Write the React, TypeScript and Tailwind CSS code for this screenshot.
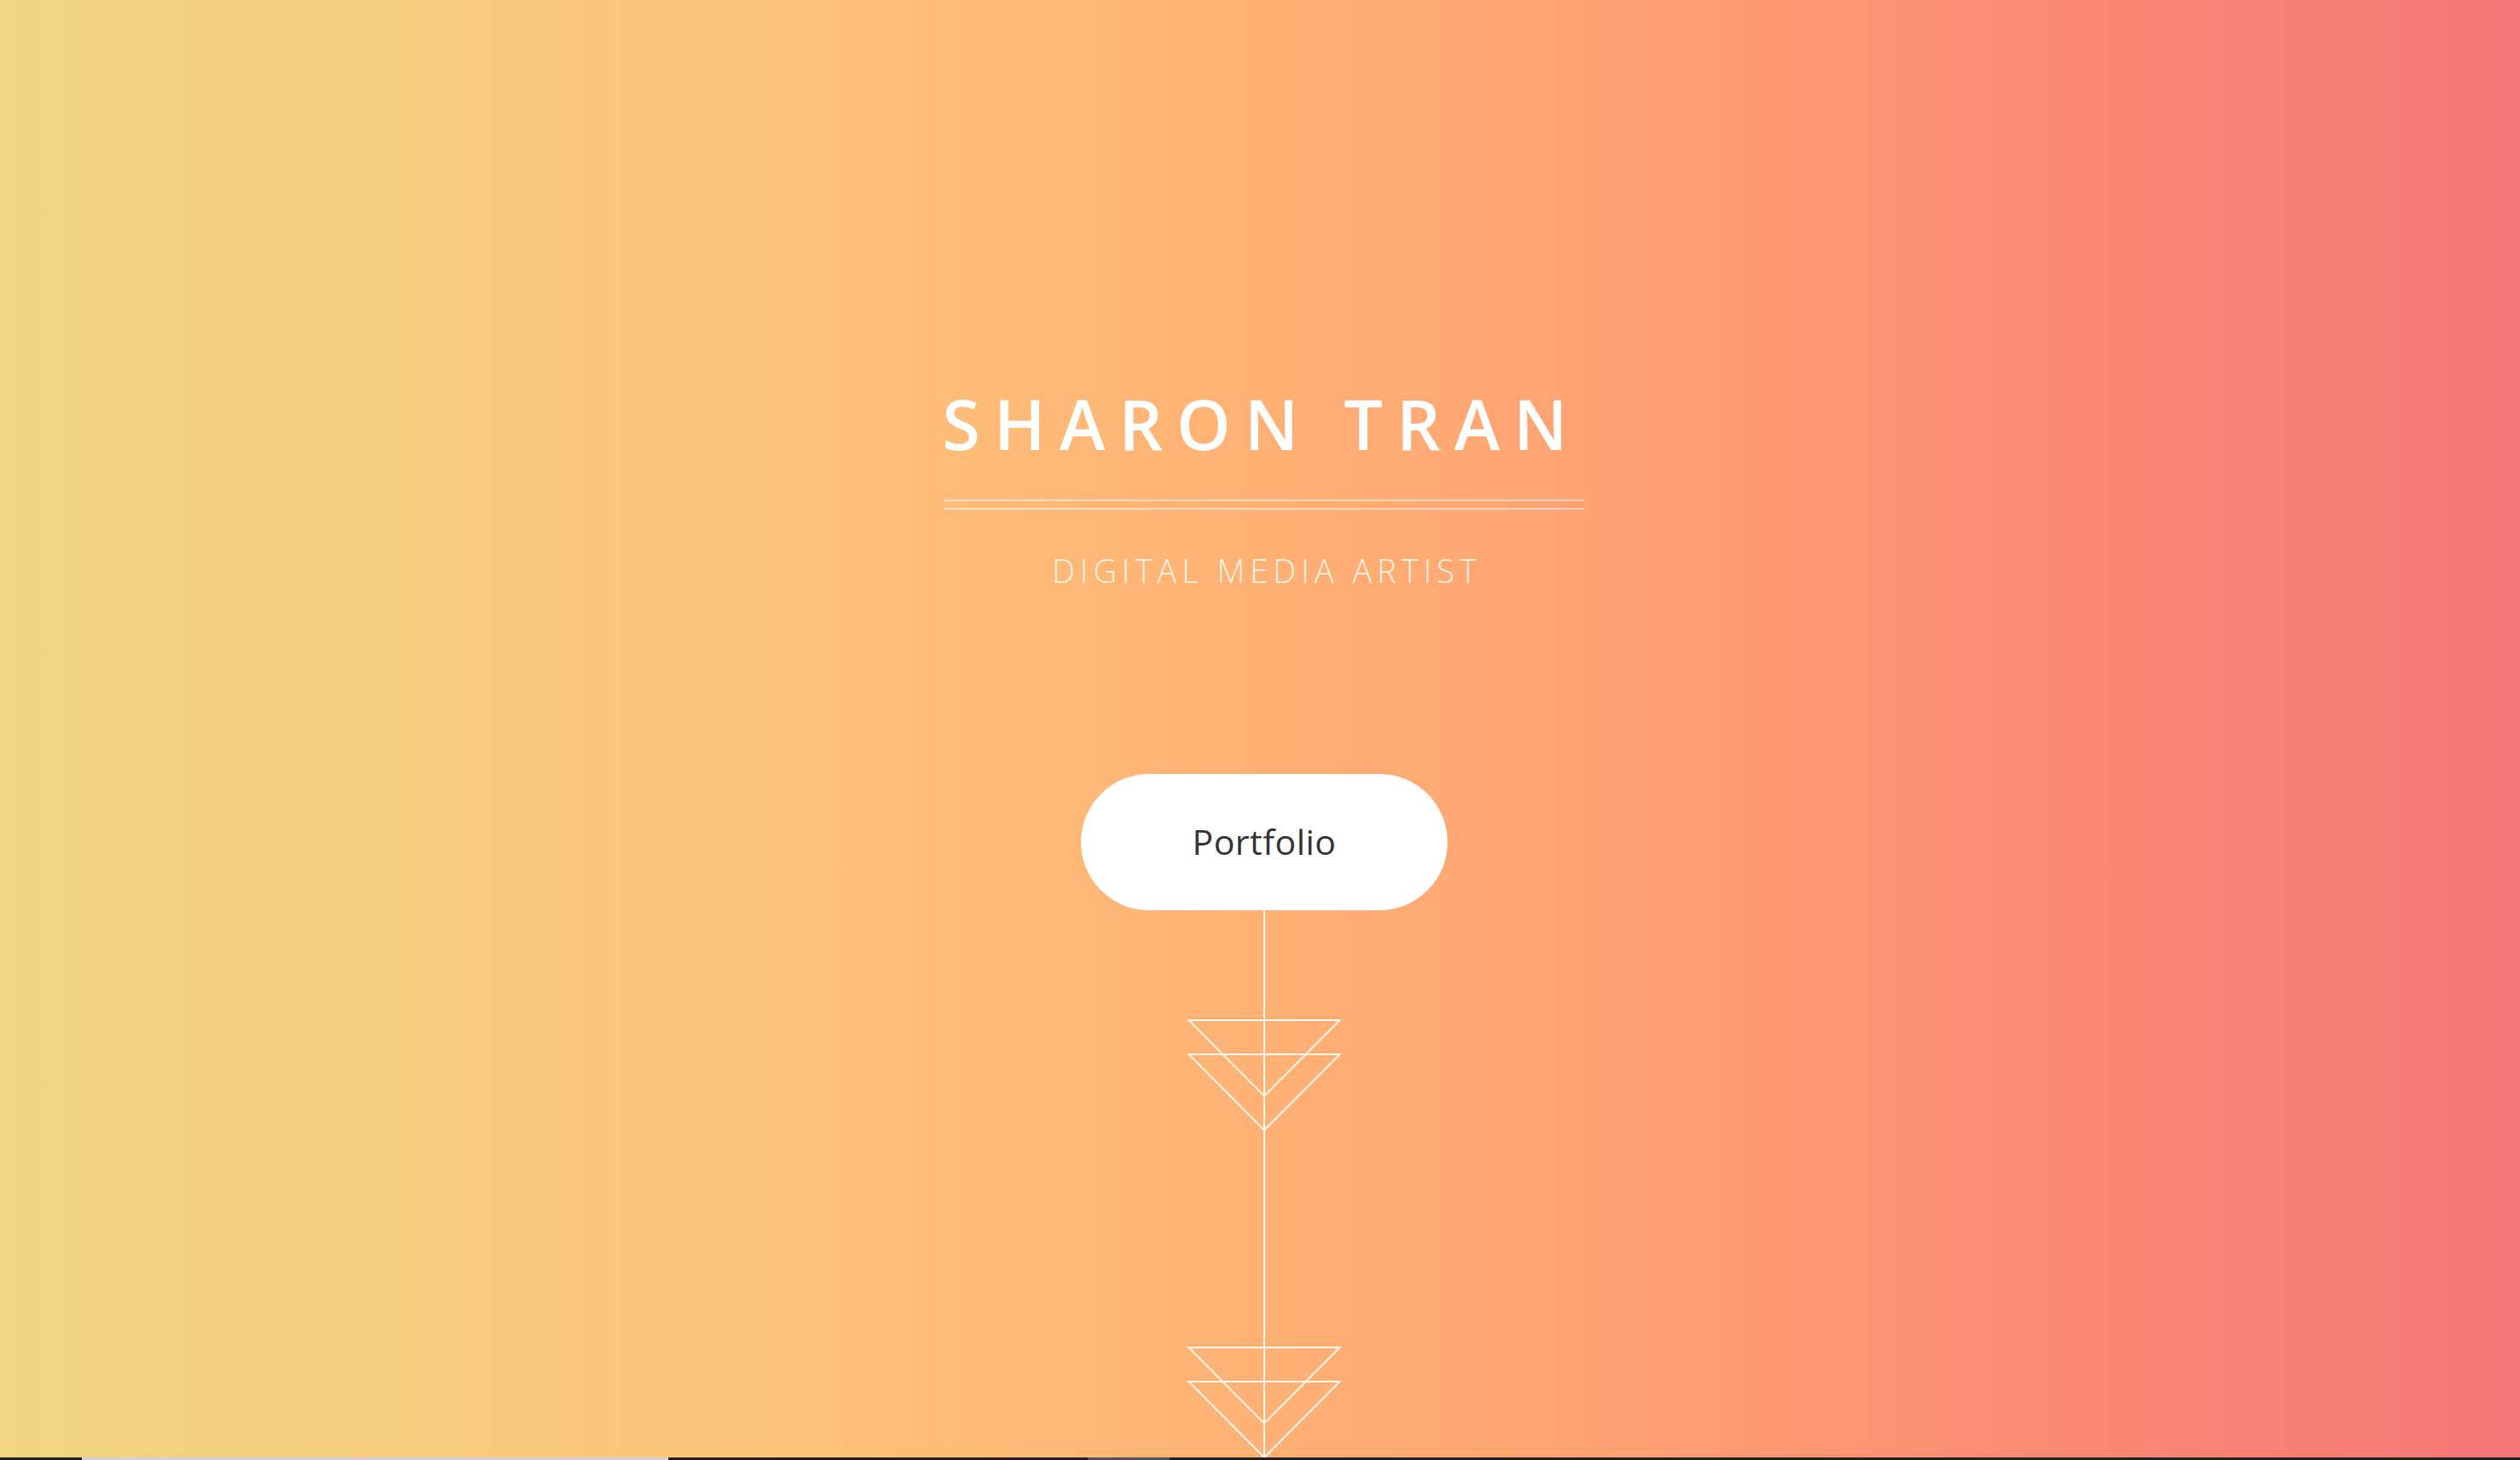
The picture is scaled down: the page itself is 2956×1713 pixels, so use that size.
import React from "react";

function Chevrons() {
  return (
    <svg width="180" height="130" viewBox="0 0 180 130" className="block overflow-visible" fill="none">
      <path d="M1.5 1 L178.5 1 L90 90 Z" stroke="#fff8ee" strokeWidth="2" strokeLinejoin="miter" />
      <path d="M1.5 41 L178.5 41 L90 130 Z" stroke="#fff8ee" strokeWidth="2" strokeLinejoin="miter" />
      <path d="M90 0 V130" stroke="#fff8ee" strokeWidth="2" />
    </svg>
  );
}

export default function App() {
  return (
    <div className="w-[2956px] h-[1713px] overflow-hidden flex flex-col">
      <section className="h-[1710px] w-full flex flex-col items-center bg-[linear-gradient(to_right,#f0d585_0%,#f6cd7e_15%,#fdbf79_35%,#ffb175_50%,#ffa072_65%,#fb8874_83%,#f57677_100%)] pl-[10px]">
        <div className="h-[456px]" />
        <h1
          className="h-[81px] leading-[81px] text-[81px] font-semibold text-white whitespace-nowrap tracking-[16px] pl-[16px] mr-[22px]"
          style={{ fontFamily: '"Open Sans", "Noto Sans", sans-serif' }}
        >
          SHARON TRAN
        </h1>
        <div className="mt-[49px] w-[752px] h-[2px] bg-white/50" />
        <div className="mt-[8px] w-[752px] h-[2px] bg-white/50" />
        <p
          className="mt-[52px] h-[38px] leading-[38px] text-[38px] font-light text-[#fff3e3] whitespace-nowrap tracking-[6px] pl-[6px]"
          style={{ fontFamily: '"Open Sans", "Noto Sans", sans-serif' }}
        >
          DIGITAL MEDIA ARTIST
        </p>
        <button
          className="mt-[220px] w-[430px] h-[160px] rounded-full bg-white flex items-center justify-center text-[41px] text-[#333333] tracking-[0.5px]"
          style={{ fontFamily: '"Open Sans", "Noto Sans", sans-serif' }}
        >
          Portfolio
        </button>
        <div className="w-[2px] h-[128px] bg-[#fff8ee]" />
        <Chevrons />
        <div className="w-[2px] h-[254px] bg-[#fff8ee]" />
        <Chevrons />
      </section>
      <div className="h-[3px] w-full bg-[#231f1f] flex">
        <div className="w-[96px]" />
        <div className="w-[688px] bg-[#d6cfcb]" />
        <div className="w-[492px]" />
        <div className="w-[96px] bg-[#555150]" />
      </div>
    </div>
  );
}
